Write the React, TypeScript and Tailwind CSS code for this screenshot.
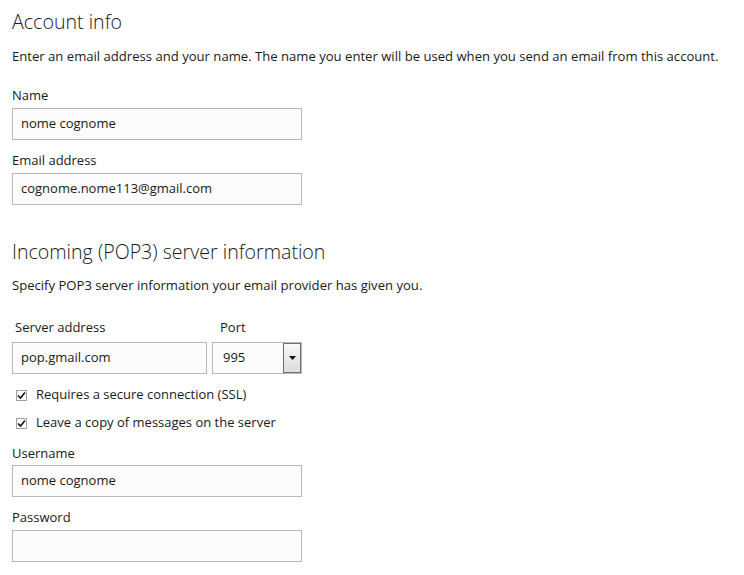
const font = { fontFamily: '"Open Sans", "Noto Sans", sans-serif' };

const TextBox = ({ value, className = 'w-[290px]' }: { value?: string; className?: string }) => (
  <div
    className={`flex h-[32px] items-center border border-[#b8b8b8] bg-[#fcfcfc] pl-[8px] text-[13px] text-[#1a1a1a] ${className}`}
  >
    {value}
  </div>
);

const Check = ({ label, className = '' }: { label: string; className?: string }) => (
  <div className={`flex h-[20px] items-center pl-[4px] ${className}`}>
    <span className="flex h-[11px] w-[11px] items-center justify-center border border-[#a0a0a0] bg-white">
      <svg width="9" height="9" viewBox="0 0 9 9">
        <path d="M1 4.5 L3.5 7 L8 1.5" fill="none" stroke="#111" strokeWidth="1.6" />
      </svg>
    </span>
    <span className="ml-[9px] text-[13px] text-[#1a1a1a]">{label}</span>
  </div>
);

const Label = ({ children, className = '' }: { children: string; className?: string }) => (
  <div className={`h-[20px] text-[13px] leading-[20px] text-[#1a1a1a] ${className}`}>{children}</div>
);

export default function App() {
  return (
    <div className="h-[575px] w-[744px] overflow-hidden bg-white pl-[12px] pt-[8px]" style={font}>
      <h2 className="h-[28px] text-[19.6px] font-light leading-[28px] text-[#1a1a1a]">Account info</h2>
      <p className="mt-[10px] h-[20px] text-[13.1px] leading-[20px] text-[#1a1a1a]">
        Enter an email address and your name. The name you enter will be used when you send an email from this account.
      </p>

      <Label className="mt-[19px]">Name</Label>
      <TextBox value="nome cognome" className="mt-[3px] w-[290px]" />
      <Label className="mt-[10px]">Email address</Label>
      <TextBox value="cognome.nome113@gmail.com" className="mt-[3px] w-[290px]" />

      <h2 className="mt-[33px] h-[28px] text-[19.6px] font-light leading-[28px] text-[#1a1a1a]">
        Incoming (POP3) server information
      </h2>
      <p className="mt-[9px] h-[20px] text-[13.1px] leading-[20px] text-[#1a1a1a]">
        Specify POP3 server information your email provider has given you.
      </p>

      <div className="mt-[22px] flex gap-[5px]">
        <div className="w-[195px]">
          <Label className="pl-[3px]">Server address</Label>
          <TextBox value="pop.gmail.com" className="mt-[5px] w-[195px]" />
        </div>
        <div className="w-[90px]">
          <Label className="pl-[8px]">Port</Label>
          <div className="mt-[5px] flex h-[32px] w-[90px] items-stretch border border-[#b8b8b8] bg-[#fcfcfc] text-[13px] text-[#1a1a1a]">
            <span className="flex flex-1 items-center pl-[10px]">995</span>
            <span className="flex w-[18px] items-center justify-center border border-[#707070] bg-gradient-to-b from-[#fafafa] to-[#dcdcdc]">
              <svg width="7" height="4" viewBox="0 0 7 4">
                <path d="M0 0 H7 L3.5 4 Z" fill="#111" />
              </svg>
            </span>
          </div>
        </div>
      </div>

      <Check label="Requires a secure connection (SSL)" className="mt-[11px]" />
      <Check label="Leave a copy of messages on the server" className="mt-[8px]" />

      <Label className="mt-[10px]">Username</Label>
      <TextBox value="nome cognome" className="mt-[2px] w-[290px]" />
      <Label className="mt-[10px]">Password</Label>
      <TextBox className="mt-[3px] w-[290px]" />
    </div>
  );
}
